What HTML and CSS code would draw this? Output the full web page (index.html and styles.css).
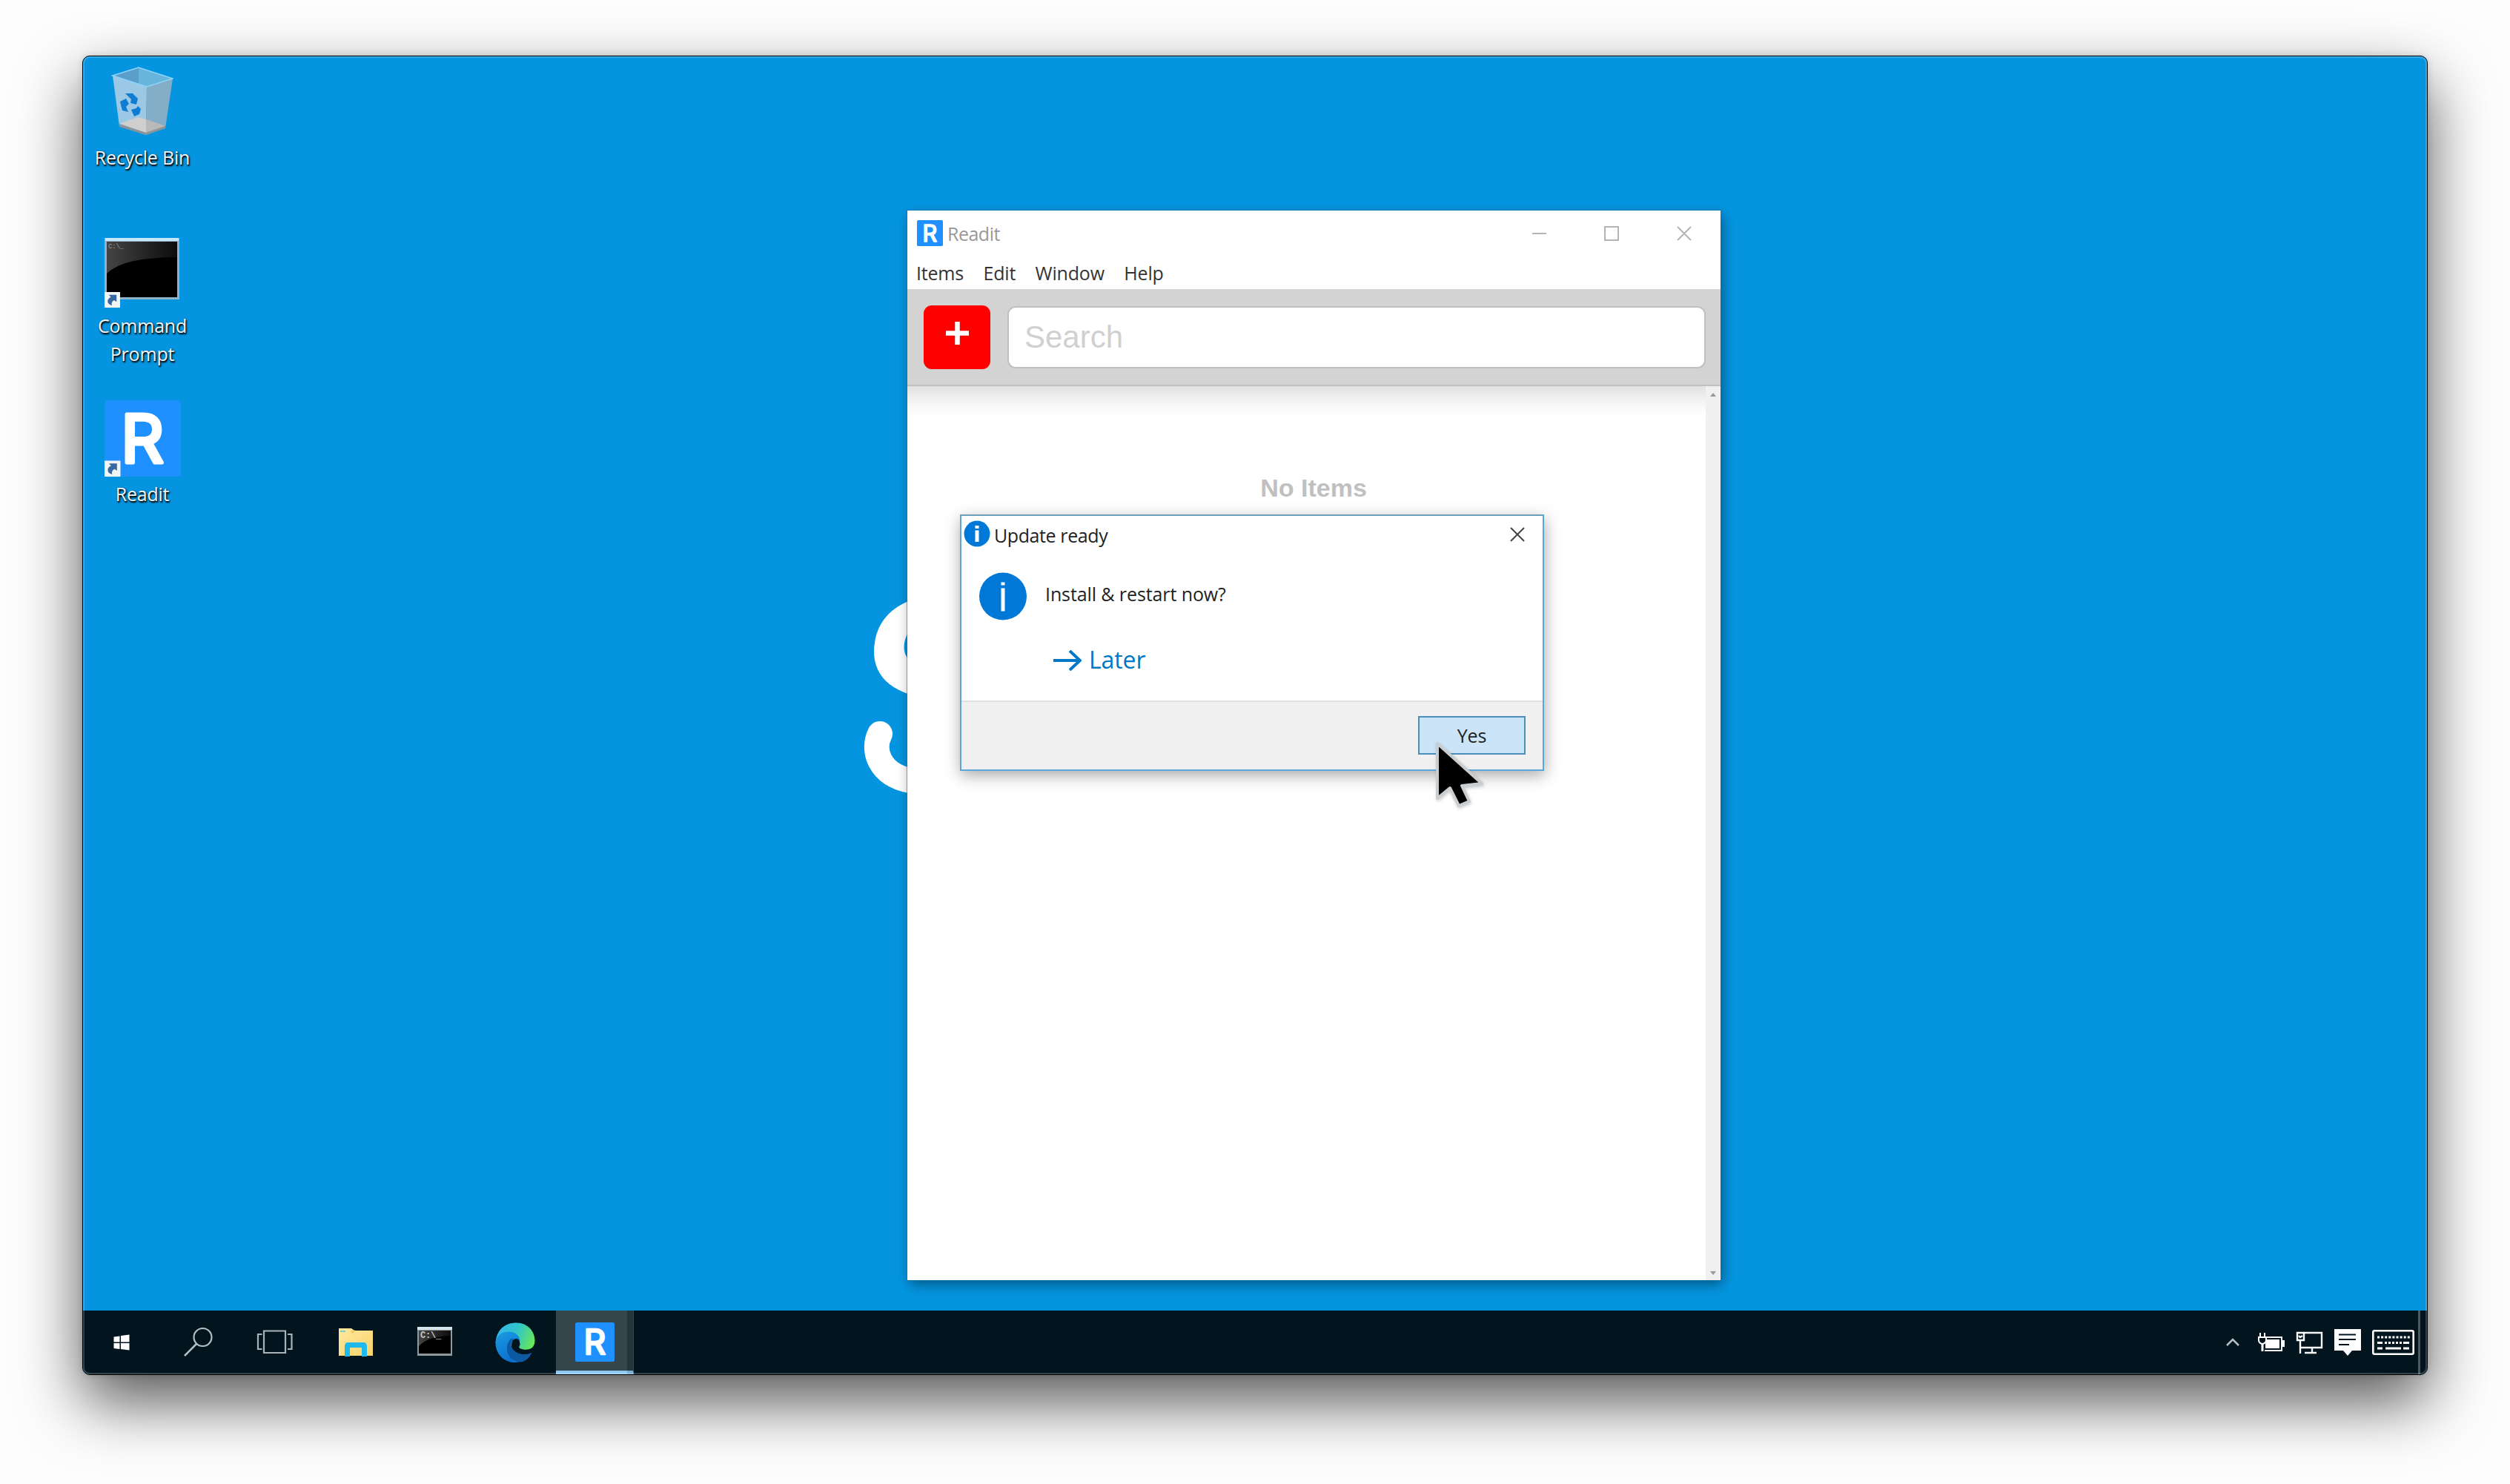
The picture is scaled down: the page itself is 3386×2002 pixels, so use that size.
FILE: index.html
```html
<!DOCTYPE html>
<html lang="en">
<head>
<meta charset="utf-8">
<title>Readit</title>
<link rel="stylesheet" href="styles.css">
</head>
<body>
<svg width="0" height="0" class="defs" aria-hidden="true">
  <defs>
    <linearGradient id="edgeGreen" x1="0" y1="0.3" x2="1" y2="0.6"><stop offset="0" stop-color="#36b5ee"/><stop offset=".5" stop-color="#31c5c9"/><stop offset="1" stop-color="#66e75a"/></linearGradient>
    <linearGradient id="edgeBlue" x1="0" y1="0" x2="0.4" y2="1"><stop offset="0" stop-color="#1b9de2"/><stop offset="1" stop-color="#0b6fd0"/></linearGradient>
    <linearGradient id="gloss" x1="0" y1="0" x2="1" y2="0"><stop offset="0" stop-color="#444"/><stop offset="1" stop-color="#0c0c0c"/></linearGradient>
    <linearGradient id="folder" x1="0" y1="0" x2="1" y2="1"><stop offset="0" stop-color="#ffe9a0"/><stop offset="1" stop-color="#f8d268"/></linearGradient>
    <clipPath id="upperBowl"><rect width="400" height="165"/></clipPath>
    <symbol id="shortcut" viewBox="0 0 22 22"><rect width="22" height="22" fill="#f2f4f6"/><path d="M6 4H17V14L13.500 11.500Q9 14 10.500 19Q4 17 4.500 12Q5 9 9 7Z" fill="#3768a0"/></symbol>
    <symbol id="readit" viewBox="0 0 102 102"><rect width="102" height="102" rx="5" fill="#1e90ff"/><text x="22" y="83.500" class="logo-letter">R</text></symbol>
  </defs>
</svg>

<main class="desktop">
  <svg class="wallpaper" viewBox="0 0 400 400"><g clip-path="url(#upperBowl)"><text class="wall-letter" transform="translate(18 270) skewX(-5)">S</text></g><path class="wall-tail" d="M67 200C56 222 66 255 108 263L140 268"/></svg>

  <div class="shortcut bin">
    <svg class="bin-icon" viewBox="0 0 84 94">
      <path d="M2 12L37 1L83 16L48 27Z" fill="#68b5dc"/>
      <path d="M37 1L2 12L37 23Z" fill="#5a9fcb"/>
      <path d="M2 12L48 27L47 92L11 80Z" fill="#9bc8e5"/>
      <path d="M48 27L83 16L73 83L47 92Z" fill="#84aec7"/>
      <path d="M11 77L36 68L47 71V89Z" fill="#cfcfcf"/><path d="M47 71L73 80L47 89Z" fill="#b9b9b9"/>
      <path d="M11 77V81L47 92L73 83V80L47 89Z" fill="#8c9499"/>
      <path d="M2 12L37 1L83 16L48 27Z" fill="none" stroke="#8ed3fa" stroke-width="1.500"/>
      <g fill="#0e7dd2"><path d="M19 36L29 36L36 43L34 51L26 49L27 44Z"/><path d="M12 47L20 43L24 50L20 54L23 61L15 59Z"/><path d="M27 58L34 56L36 53L40 57L38 64L31 67Z"/></g>
    </svg>
    <span class="label">Recycle Bin</span>
  </div>
  <div class="shortcut cmd">
    <svg class="cmd-icon" viewBox="0 0 102 94">
      <rect width="101" height="83" fill="#8fb4c9"/><rect x="1" width="99" height="4" fill="#c5e9fb"/>
      <rect x="3" y="5" width="95" height="75" fill="#000"/>
      <path d="M3 5H98V26Q25 26 3 48Z" fill="url(#gloss)"/>
      <text x="5" y="14" class="tiny">C:\_</text>
      <use href="#shortcut" x="0" y="73" width="21" height="21"/>
    </svg>
    <span class="label">Command Prompt</span>
  </div>
  <div class="shortcut app">
    <svg class="app-icon" viewBox="0 0 102 102"><use href="#readit"/><use href="#shortcut" x="0" y="80.500" width="21.500" height="21.500"/></svg>
    <span class="label">Readit</span>
  </div>

  <section class="window">
    <header class="titlebar">
      <svg class="title-icon"><use href="#readit"/></svg>
      <span class="title">Readit</span>
      <svg class="controls" viewBox="0 0 216 20"><path d="M0 10H19M98 1H116V19H98ZM196 1L214 19M214 1L196 19" fill="none" stroke="#b4b4b4" stroke-width="2"/></svg>
    </header>
    <nav class="menu"><span>Items</span><span>Edit</span><span>Window</span><span>Help</span></nav>
    <div class="toolbar">
      <button class="add" aria-label="Add"><svg viewBox="0 0 33 33"><path d="M16.500 1V32M1 16.500H32" stroke="#fff" stroke-width="6.500"/></svg></button>
      <input class="search" placeholder="Search">
    </div>
    <div class="content">
      <div class="list"><p class="empty">No Items</p></div>
      <div class="scrollbar"><i class="up"></i><i class="down"></i></div>
    </div>
  </section>

  <section class="dialog">
    <header class="dialog-title">
      <svg class="info-small" viewBox="0 0 36 36"><circle cx="18" cy="18" r="17.500" fill="#0078d7"/><path d="M18 7V11M18 13.500V29" stroke="#fff" stroke-width="5"/></svg>
      <span>Update ready</span>
      <svg class="close" viewBox="0 0 20 20"><path d="M1 1L19 19M19 1L1 19" stroke="#444" stroke-width="2"/></svg>
    </header>
    <div class="dialog-body">
      <svg class="info-big" viewBox="0 0 64 64"><circle cx="32" cy="32" r="32" fill="#0078d7"/><path d="M32 13V17M32 21V52" stroke="#fff" stroke-width="5"/></svg>
      <div class="message">
        <span>Install &amp; restart now?</span>
        <a class="later"><svg viewBox="0 0 38 28"><path d="M0 14H36M22 1L36 14L22 27" fill="none" stroke="#0078c8" stroke-width="4"/></svg>Later</a>
      </div>
    </div>
    <footer class="dialog-footer"><button class="yes">Yes</button></footer>
  </section>

  <svg class="cursor" viewBox="0 0 76 106"><path d="M8 8V82L25 68L37 92L51 86L41 65L68 62Z" fill="#000" stroke="#c9cdd0" stroke-width="4" stroke-linejoin="round"/></svg>

  <footer class="taskbar">
    <svg class="tb-icon" width="104" height="86" viewBox="0 0 104 86"><path d="M41.500 35.500L49.500 34.500V42.500H41.500ZM51 34L62.500 32.500V42.500H51ZM41.500 44H49.500V52L41.500 51ZM51 44H62.500V53.500L51 52Z" fill="#fff"/></svg>
    <svg class="tb-icon" width="100" height="86" viewBox="0 0 100 86"><circle cx="57.500" cy="36" r="12" fill="none" stroke="#b5bec2" stroke-width="2.200"/><path d="M49 45L33 61" stroke="#b5bec2" stroke-width="2.600"/></svg>
    <svg class="tb-icon" width="92" height="86" viewBox="0 0 92 86"><path d="M40 27.500H69V57H40ZM37.500 32H32V52H37.500M72 32H77.500V52H72" fill="none" stroke="#a9b3b7" stroke-width="2.200"/></svg>
    <svg class="tb-icon" width="116" height="86" viewBox="0 0 116 86"><path d="M49 24H66L70 27H95V61H49Z" fill="url(#folder)"/><path d="M51 27H58V29H51Z" fill="#6fd0d8"/><path d="M65 28L71 26L68 31Z" fill="#efc750"/><path d="M57 62V48Q57 43 62 43H82Q87 43 87 48V62H80V50H64V62Z" fill="#1fb9ee"/></svg>
    <svg class="tb-icon" width="92" height="86" viewBox="0 0 92 86"><rect x="39" y="22" width="47" height="39" fill="#91989b"/><rect x="39" y="22" width="47" height="4" fill="#d5e4ea"/><rect x="41" y="27" width="43" height="31" fill="#000"/><path d="M41 27H84V34Q54 34 41 48Z" fill="url(#gloss)"/><text x="43" y="36.500" class="prompt">C:\_</text></svg>
    <svg class="tb-icon" width="134" height="86" viewBox="0 0 134 86"><g transform="translate(52.500 16.500)"><path d="M0 28C1 8 14 0 28 0C44 0 53 12 53 24C53 34 46 37 38 36C31 35 31 33 33 30C33 20 27 16 18 16C8 16 2 20 0 28Z" fill="url(#edgeGreen)"/><path d="M0 27C1 16 9 12 18 12C27 12 33 18 33 25C30 20 26 21 23 24C20 30 21 45 34 52C18 58 0 46 0 27Z" fill="url(#edgeBlue)"/><path d="M20 22C11 32 15 52 34 53C41 52 46 47 49 40C38 46 25 41 21 32C20 28 21 24 25 21Z" fill="#0c5aa2"/></g></svg>
    <div class="tb-active"><svg><use href="#readit"/></svg></div>
    <div class="tb-stack"></div>
    <div class="tray">
      <svg width="18" height="12" viewBox="0 0 18 12"><path d="M1 10L9 2L17 10" fill="none" stroke="#b8c0c4" stroke-width="2.500"/></svg>
      <svg width="36" height="28" viewBox="0 0 36 28"><path d="M11 7H32V25H9" fill="none" stroke="#f4f4f4" stroke-width="2"/><path d="M12 10H29V22H10V16Z" fill="#fff"/><path d="M33 11H36V20H33Z" fill="#fff"/><path d="M3 1V7M9 1V7" stroke="#fff" stroke-width="2"/><path d="M1 7H11V11Q11 15 6 16Q1 15 1 11Z" fill="#02151f" stroke="#fff" stroke-width="2"/><path d="M6 16V26" stroke="#fff" stroke-width="3"/></svg>
      <svg width="37" height="32" viewBox="0 0 37 32"><path d="M11 3H35V23H7M22 23V29M12 30H28" fill="none" stroke="#f4f4f4" stroke-width="2.400"/><path d="M2 3H11V13H2ZM6 13V31M4 7L6 9L9 7" fill="none" stroke="#fff" stroke-width="2.400"/></svg>
      <svg width="36" height="36" viewBox="0 0 36 36"><path d="M0 0H36V29H24L18 36L12 29H0Z" fill="#fff"/><path d="M6 7.500H29M6 14H29M6 21H20" stroke="#02151f" stroke-width="2"/></svg>
      <svg width="57" height="34" viewBox="0 0 57 34"><rect x="1.300" y="1.300" width="54.400" height="31.400" rx="2" fill="none" stroke="#fff" stroke-width="2.600"/><path d="M7 10H51" stroke="#fff" stroke-width="3" stroke-dasharray="3 2.100"/><path d="M7 17.500H14M42 17.500H50M7 25H14M18 25H39M42 25H50" stroke="#fff" stroke-width="3"/><path d="M17 17.500H40" stroke="#fff" stroke-width="3" stroke-dasharray="3 2"/></svg>
    </div>
    <div class="show-desktop"></div>
  </footer>
</main>
</body>
</html>
```
FILE: styles.css
```css
* { box-sizing: border-box; }
body {
  margin: 0;
  width: 3386px;
  height: 2002px;
  padding: 75px 111px 0;
  overflow: hidden;
  background: #fdfdfd;
  font: 25px/37.5px "Open Sans", "Noto Sans", sans-serif;
  letter-spacing: -0.2px;
  color: #222;
}
.defs { position: absolute; }
svg { display: block; flex: none; }

.desktop {
  position: relative;
  display: flex;
  flex-direction: column;
  justify-content: flex-end;
  width: 3164px;
  height: 1780px;
  border: 1px solid #000;
  border-radius: 10px;
  background: #0595e0;
  box-shadow: 0 36px 84px rgba(0, 0, 0, .66), 0 0 10px rgba(0, 0, 0, .15);
}
.desktop::after {
  content: "";
  position: absolute;
  inset: 0;
  border-radius: 9px;
  box-shadow: inset 0 0 0 2px rgba(255, 255, 255, .2);
  pointer-events: none;
}

/* wallpaper */
.wallpaper { position: absolute; left: 1008px; top: 714px; width: 400px; height: 400px; }
.wall-letter {
  font: 366px "Liberation Sans", Arial, sans-serif;
  fill: #fff;
  stroke: #fff;
  stroke-width: 7px;
  stroke-linejoin: round;
}
.wall-tail { fill: none; stroke: #fff; stroke-width: 34px; stroke-linecap: round; }
.logo-letter {
  font: 400 89px Inter, "Open Sans", sans-serif;
  letter-spacing: 0;
  fill: #fff;
  stroke: #fff;
  stroke-width: 5px;
  stroke-linejoin: round;
}

/* desktop shortcuts */
.shortcut {
  position: absolute;
  left: 10px;
  width: 140px;
  display: flex;
  flex-direction: column;
  align-items: center;
}
.label {
  width: 130px;
  white-space: nowrap;
  text-align: center;
  color: #f1f3f5;
  text-shadow: 1px 2px 2px #000, 1px 1px 3px rgba(0, 0, 0, .7);
}
.cmd .label { white-space: normal; }
.bin { top: 14px; gap: 10px; }
.bin-icon { width: 84px; height: 94px; }
.cmd { top: 245px; gap: 6px; }
.cmd-icon { width: 102px; height: 94px; }
.app { top: 464px; gap: 5px; }
.app-icon { width: 103px; height: 103px; }
.tiny { font: 9px "Liberation Mono", monospace; fill: #999; }
.prompt { font: bold 12px "Liberation Mono", monospace; fill: #c8c8c8; }

/* application window */
.window {
  position: absolute;
  left: 1112px;
  top: 208px;
  width: 1097px;
  height: 1443px;
  display: flex;
  flex-direction: column;
  background: #fff;
  box-shadow: 0 0 0 1px rgba(20, 110, 160, .55), 3px 6px 16px rgba(0, 0, 0, .4);
}
.titlebar { display: flex; align-items: center; height: 64px; padding: 0 38px 0 13px; }
.title-icon { width: 35px; height: 35px; margin: -3px 6px 0 0; }
.title { flex: 1; color: #999; letter-spacing: -.5px; }
.controls { width: 216px; height: 20px; margin-top: -3px; }
.menu { display: flex; gap: 26.5px; height: 42px; padding: 0 0 1px 12px; align-items: center; color: #333; }
.toolbar {
  display: flex;
  align-items: center;
  gap: 23px;
  height: 131px;
  padding: 0 20px 0 22px;
  background: #d3d3d3;
  border-bottom: 2px solid #c0c0c0;
}
.add {
  width: 90px;
  height: 86px;
  padding: 0 0 10px;
  border: 0;
  border-radius: 11px;
  background: #f00;
  display: flex;
  align-items: center;
  justify-content: center;
}
.add svg { width: 33px; height: 33px; }
.search {
  flex: 1;
  min-width: 0;
  height: 84px;
  padding: 0 21px;
  border: 2px solid #c0c0c0;
  border-radius: 11px;
  outline: 0;
  background: #fff;
  font: 42px "Liberation Sans", Arial, sans-serif;
}
.search::placeholder { color: #d0d0d0; opacity: 1; }
.content { flex: 1; display: flex; }
.list { flex: 1; padding-top: 117px; background: linear-gradient(#e2e2e2, #f0f0f0 16px, #fafafa 30px, #fff 42px); }
.empty {
  margin: 0 0 0 19px;
  font: bold 34px/40px "Liberation Sans", Arial, sans-serif;
  letter-spacing: 0;
  text-align: center;
  color: #c0c0c0;
}
.scrollbar {
  width: 20px;
  padding: 9px 4px 7px 6px;
  display: flex;
  flex-direction: column;
  justify-content: space-between;
  background: #f0f0f0;
}
.up, .down { border: 4.5px solid transparent; border-top-width: 0; border-bottom: 5px solid #999; width: 0; }
.down { transform: rotate(180deg); }

/* message box */
.dialog {
  position: absolute;
  left: 1183px;
  top: 618px;
  width: 788px;
  height: 346px;
  display: flex;
  flex-direction: column;
  border: 2px solid #5aa6da;
  border-top-color: #6c9fbd;
  background: #fff;
  box-shadow: 1px 6px 20px rgba(0, 0, 0, .34);
}
.dialog-title { display: flex; align-items: center; height: 52px; padding: 0 24px 0 3px; gap: 5px; }
.dialog-title span { flex: 1; padding-top: 1px; letter-spacing: -.4px; }
.info-small { width: 36px; height: 36px; margin-top: -4px; }
.close { width: 20px; height: 20px; margin-top: -2px; }
.dialog-body { flex: 1; display: flex; gap: 25px; padding: 24px; }
.info-big { width: 64px; height: 65px; }
.message { display: flex; flex-direction: column; gap: 50px; padding-top: 11px; letter-spacing: -.1px; }
.later {
  display: flex;
  align-items: center;
  gap: 10px;
  margin-left: 11px;
  font-size: 32px;
  color: #0078c8;
}
.later svg { width: 38px; height: 28px; margin-top: 4px; }
.dialog-footer {
  height: 93px;
  padding: 19px 23px 0 0;
  display: flex;
  justify-content: flex-end;
  align-items: flex-start;
  background: #f0f0f0;
  border-top: 2px solid #e0e0e0;
}
.yes {
  width: 145px;
  height: 52px;
  padding: 2px 0 0;
  border: 2px solid #4a8fba;
  background: #cce4f7;
  font: inherit;
  letter-spacing: inherit;
  color: #222;
}
.cursor { position: absolute; left: 1819px; top: 919px; width: 76px; height: 106px; filter: drop-shadow(1px 2px 2px rgba(0, 0, 0, .2)); }

/* taskbar */
.taskbar {
  display: flex;
  height: 86px;
  background: #02151f;
  border-radius: 0 0 9px 9px;
  overflow: hidden;
}
.tb-active {
  width: 96px;
  background: #36454c;
  border-bottom: 5px solid #8ccaf4;
  display: flex;
  align-items: center;
  justify-content: center;
  padding: 4px 0 0 8px;
}
.tb-active svg { width: 53px; height: 53px; }
.tb-stack { width: 9px; background: #24343b; border-bottom: 5px solid #78aed2; border-right: 1px solid #36454c; }
.tray { flex: 1; display: flex; align-items: center; justify-content: flex-end; gap: 15px; padding-right: 5px; }
.tray svg:first-child { margin-right: 10px; }
.show-desktop { width: 12px; border-left: 3px solid #4a5a61; }
```
